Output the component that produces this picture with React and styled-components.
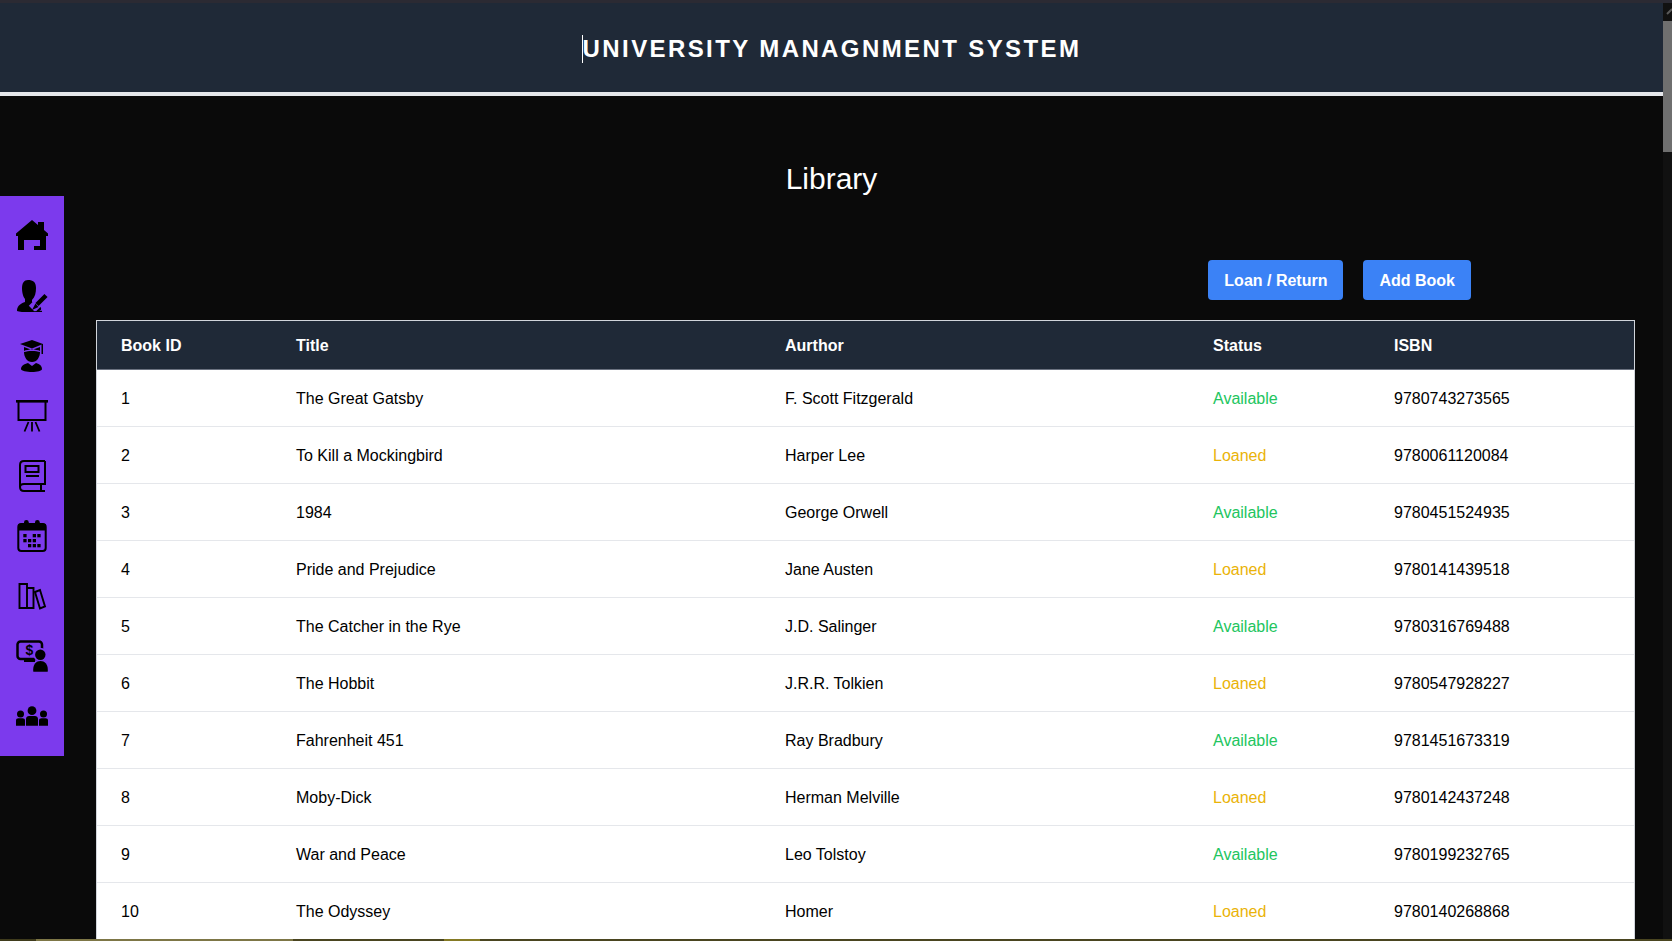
import styled, { createGlobalStyle } from "styled-components";

const books = [
  [1, "The Great Gatsby", "F. Scott Fitzgerald", "Available", "9780743273565"],
  [2, "To Kill a Mockingbird", "Harper Lee", "Loaned", "9780061120084"],
  [3, "1984", "George Orwell", "Available", "9780451524935"],
  [4, "Pride and Prejudice", "Jane Austen", "Loaned", "9780141439518"],
  [5, "The Catcher in the Rye", "J.D. Salinger", "Available", "9780316769488"],
  [6, "The Hobbit", "J.R.R. Tolkien", "Loaned", "9780547928227"],
  [7, "Fahrenheit 451", "Ray Bradbury", "Available", "9781451673319"],
  [8, "Moby-Dick", "Herman Melville", "Loaned", "9780142437248"],
  [9, "War and Peace", "Leo Tolstoy", "Available", "9780199232765"],
  [10, "The Odyssey", "Homer", "Loaned", "9780140268868"],
];

const HomeIcon = () => (
  <svg width="32" height="32" viewBox="0 1 32 32">
    <path
      fillRule="evenodd"
      d="M16 1 L22 6 V3 H28 V11 L32 14.5 V17 H30 V31 H18 V21 H14 V31 H2 V17 H0 V14.5 Z M8 21 V31 H14 V21 Z M18 21 V27 H24 V21 Z"
    />
  </svg>
);

const TeacherIcon = () => (
  <svg width="32" height="32" viewBox="0 0 32 32">
    <path d="M12 0 C17 0 20 2 20 8 C20 13 19 17 16 20 V22 C20 23 24 25 25 28 C26 31 22 32 13 32 C8 32 3 32 1 31 C1 27 3 24 9 22 V19 C7 17 6 12 6 8 C6 3 8 0 12 0 Z" />
    <path d="M29 16 L16 29" stroke="#7c3aed" strokeWidth="9" />
    <path d="M30 15.5 L21 24.5" stroke="#000" strokeWidth="4.5" />
    <path d="M19.5 23.5 L16 30 L22.5 27 Z" />
    <path d="M14 30 C13 32 16 32.5 26 31.5" stroke="#000" strokeWidth="1.4" fill="none" />
  </svg>
);

const GraduateIcon = () => (
  <svg width="32" height="32" viewBox="0 0 32 32">
    <path d="M4 4 L16 0 L27 4 L16 8.5 Z" />
    <path d="M25.5 4 H27 V14 H25.5 Z" />
    <path d="M8 7 L16 10 L24 7 V11 C20 9 12 9 8 11 Z" />
    <path d="M8 12 C12 10.5 20 10.5 24 12 C24 17 21 22 16 22 C11 22 8 17 8 12 Z" />
    <path d="M12 23 L16 26 L20 23 C24 24 26 26 26 29 C26 31 21 32 16 32 C11 32 5 31 5 29 C5 26 8 24 12 23 Z" />
  </svg>
);

const BoardIcon = () => (
  <svg width="32" height="32" viewBox="0 0 32 32" fill="none" stroke="#000">
    <path d="M0 1.3 H32" strokeWidth="2.6" />
    <path d="M2.5 2 V20 H29.5 V2" strokeWidth="2" />
    <path d="M12.5 22 L8.5 31.5 M16 22 V31.5 M19.5 22 L23.5 31.5" strokeWidth="1.8" />
  </svg>
);

const BookIcon = () => (
  <svg width="32" height="32" viewBox="0 0 32 32" fill="none" stroke="#000" strokeWidth="2">
    <path d="M29 1 H8 C5.5 1 4 2.5 4 5 V27 C4 29.5 5.5 31 8 31 H29" />
    <path d="M29 1 V24 H8 C5.5 24 4 25.5 4 27" />
    <path d="M25 24 V31" />
    <rect x="9.5" y="6" width="13" height="6" />
    <path d="M10 16 H23" />
  </svg>
);

const CalendarIcon = () => {
  const dots = [
    [7.3, 14], [16.7, 14], [21.3, 14],
    [7.3, 19], [12, 19], [16.7, 19],
    [12, 24], [16.7, 24], [21.3, 24],
  ];
  return (
    <svg width="32" height="32" viewBox="0 0 32 32">
      <rect x="2.3" y="4" width="27.4" height="27" rx="3" fill="none" stroke="#000" strokeWidth="2" />
      <path d="M2 10.5 V6 C2 4.5 3 3.5 5 3.5 H27 C29 3.5 30 4.5 30 6 V10.5 Z" />
      <rect x="8" y="0" width="4.7" height="7" rx="2.3" />
      <rect x="19" y="0" width="4.7" height="7" rx="2.3" />
      {dots.map(([x, y]) => (
        <rect key={`${x}-${y}`} x={x} y={y} width="3.3" height="3.3" />
      ))}
    </svg>
  );
};

const ShelfIcon = () => (
  <svg width="32" height="32" viewBox="0 0 32 32" fill="none" stroke="#000" strokeWidth="1.9">
    <path d="M3.5 28 V4 H11 V28 Z" />
    <path d="M11 8 H17.5 V28 H11" />
    <path d="M19 12 L24 10 L29 26.5 L24 28.5 Z" />
  </svg>
);

const FinanceIcon = () => (
  <svg width="32" height="32" viewBox="0 0 32 32">
    <rect x="1.5" y="1.5" width="24.5" height="17.5" rx="3" fill="none" stroke="#000" strokeWidth="2.5" />
    <path d="M8 19 H19 V22 H8 Z" />
    <text x="13.5" y="15" textAnchor="middle" fontFamily="Liberation Sans, sans-serif" fontSize="14" fontWeight="700">$</text>
    <circle cx="24.3" cy="14.7" r="7" fill="#7c3aed" />
    <circle cx="24.3" cy="14.7" r="5.2" />
    <path d="M17.3 31.7 C16.5 25 20 21 24.5 21 C29 21 32.5 25 31.7 31.7 Z" />
  </svg>
);

const GroupIcon = () => (
  <svg width="32" height="32" viewBox="0 0 32 32">
    <circle cx="16" cy="10.7" r="4.4" />
    <circle cx="4.5" cy="14" r="3.5" />
    <circle cx="27.5" cy="14" r="3.5" />
    <path d="M10 25.7 V19 C10 17 11.5 16 13 16 H19 C20.5 16 22 17 22 19 V25.7 Z" />
    <path d="M0 25.7 V20.5 C0 19 1 18.3 2.5 18.3 H6.5 C8 18.3 9 19 9 20.5 V25.7 Z" />
    <path d="M23 25.7 V20.5 C23 19 24 18.3 25.5 18.3 H29.5 C31 18.3 32 19 32 20.5 V25.7 Z" />
  </svg>
);

const navIcons = [
  HomeIcon, TeacherIcon, GraduateIcon, BoardIcon, BookIcon,
  CalendarIcon, ShelfIcon, FinanceIcon, GroupIcon,
];

const App = () => {
  return (
    <Window>
      <GlobalStyle />
      <TopStrip />
      <Frame>
        <Page>
          <Header>
            <HeaderTitle>UNIVERSITY MANAGNMENT SYSTEM</HeaderTitle>
          </Header>
          <Sidebar>
            {navIcons.map((Icon, i) => (
              <NavItem key={i}>
                <Icon />
              </NavItem>
            ))}
          </Sidebar>
          <Main>
            <PageTitle>Library</PageTitle>
            <Actions>
              <ActionButton>Loan / Return</ActionButton>
              <ActionButton>Add Book</ActionButton>
            </Actions>
            <BookTable>
              <colgroup>
                <col style={{ width: 175 }} />
                <col style={{ width: 489 }} />
                <col style={{ width: 428 }} />
                <col style={{ width: 181 }} />
                <col />
              </colgroup>
              <thead>
                <tr>
                  <th>Book ID</th>
                  <th>Title</th>
                  <th>Aurthor</th>
                  <th>Status</th>
                  <th>ISBN</th>
                </tr>
              </thead>
              <tbody>
                {books.map(([id, title, author, status, isbn]) => (
                  <tr key={id}>
                    <td>{id}</td>
                    <td>{title}</td>
                    <td>{author}</td>
                    <StatusCell $available={status === "Available"}>{status}</StatusCell>
                    <td>{isbn}</td>
                  </tr>
                ))}
              </tbody>
            </BookTable>
          </Main>
        </Page>
        <ScrollTrack>
          <ScrollArrow width="9" height="18" viewBox="0 0 9 18">
            <path d="M4 11 L9 6" fill="none" stroke="#5a5a5a" strokeWidth="2" />
          </ScrollArrow>
          <ScrollThumb />
        </ScrollTrack>
      </Frame>
      <BottomStrip>
        <StripPiece $w={36} $c="#3f3b1c" />
        <StripPiece $w={257} $c="#7d7646" />
        <StripPiece $w={151} $c="#4a4520" />
        <StripPiece $w={36} $c="#857a24" />
        <StripPiece $grow $c="#4a4520" />
      </BottomStrip>
    </Window>
  );
};

export default App;

const GlobalStyle = createGlobalStyle`
  html, body {
    margin: 0;
    height: 100%;
    overflow: hidden;
    background: #0a0a0a;
  }
  body {
    font-family: "Liberation Sans", Arial, sans-serif;
  }
`;

const Window = styled.div`
  display: flex;
  flex-direction: column;
  height: 941px;
  overflow: hidden;
`;

const TopStrip = styled.div`
  height: 3px;
  flex: none;
  background: #2b2a33;
`;

const Frame = styled.div`
  display: flex;
  flex: 1;
  min-height: 0;
`;

const Page = styled.div`
  position: relative;
  flex: 1;
  min-width: 0;
  overflow: hidden;
  background: #0a0a0a;
`;

const Header = styled.header`
  display: flex;
  align-items: center;
  justify-content: center;
  height: 89px;
  background: #1f2937;
  border-bottom: 4px solid #e5e7eb;
`;

const HeaderTitle = styled.h1`
  margin: 2px 0 0;
  border-left: 1px solid #fff;
  color: #fff;
  font-size: 24px;
  line-height: 28px;
  font-weight: 700;
  letter-spacing: 2.4px;
`;

const Sidebar = styled.nav`
  position: absolute;
  left: 0;
  top: 193px;
  width: 64px;
  height: 560px;
  padding: 10px 0;
  box-sizing: border-box;
  background: #7c3aed;
`;

const NavItem = styled.div`
  display: flex;
  align-items: center;
  justify-content: center;
  height: 60px;
`;

const Main = styled.main`
  padding: 65px 28px 0 97px;
`;

const PageTitle = styled.h2`
  margin: 0 -28px 0 -97px;
  text-align: center;
  color: #fff;
  font-size: 30px;
  line-height: 36px;
  font-weight: 400;
`;

const Actions = styled.div`
  display: flex;
  justify-content: flex-end;
  gap: 20px;
  margin-top: 63px;
  margin-bottom: 21px;
  padding-right: 164px;
`;

const ActionButton = styled.button`
  height: 40px;
  padding: 1px 16px 0;
  border: none;
  border-radius: 4px;
  background: #3b82f6;
  color: #fff;
  font-family: inherit;
  font-size: 16px;
  font-weight: 700;
`;

const BookTable = styled.table`
  width: 1537px;
  table-layout: fixed;
  border-collapse: collapse;
  background: #fff;
  outline: 1px solid #d1d5db;
  color: #000;
  font-size: 16px;

  th {
    height: 47px;
    padding: 1px 24px 0;
    border-bottom: 1px solid #6b7280;
    background: #1f2937;
    color: #fff;
    text-align: left;
    font-weight: 700;
  }

  td {
    height: 54px;
    padding: 2px 24px 0;
    border-bottom: 1px solid #e5e7eb;
  }
`;

const StatusCell = styled.td`
  color: ${(p) => (p.$available ? "#22c55e" : "#eab308")};
`;

const ScrollTrack = styled.div`
  flex: none;
  width: 9px;
  background: #111;
`;

const ScrollArrow = styled.svg`
  display: block;
`;

const ScrollThumb = styled.div`
  height: 131px;
  background: #6f6f6f;
`;

const BottomStrip = styled.div`
  display: flex;
  flex: none;
  height: 2px;
`;

const StripPiece = styled.div`
  width: ${(p) => (p.$w ? `${p.$w}px` : "auto")};
  flex: ${(p) => (p.$grow ? 1 : "none")};
  background: ${(p) => p.$c};
`;
